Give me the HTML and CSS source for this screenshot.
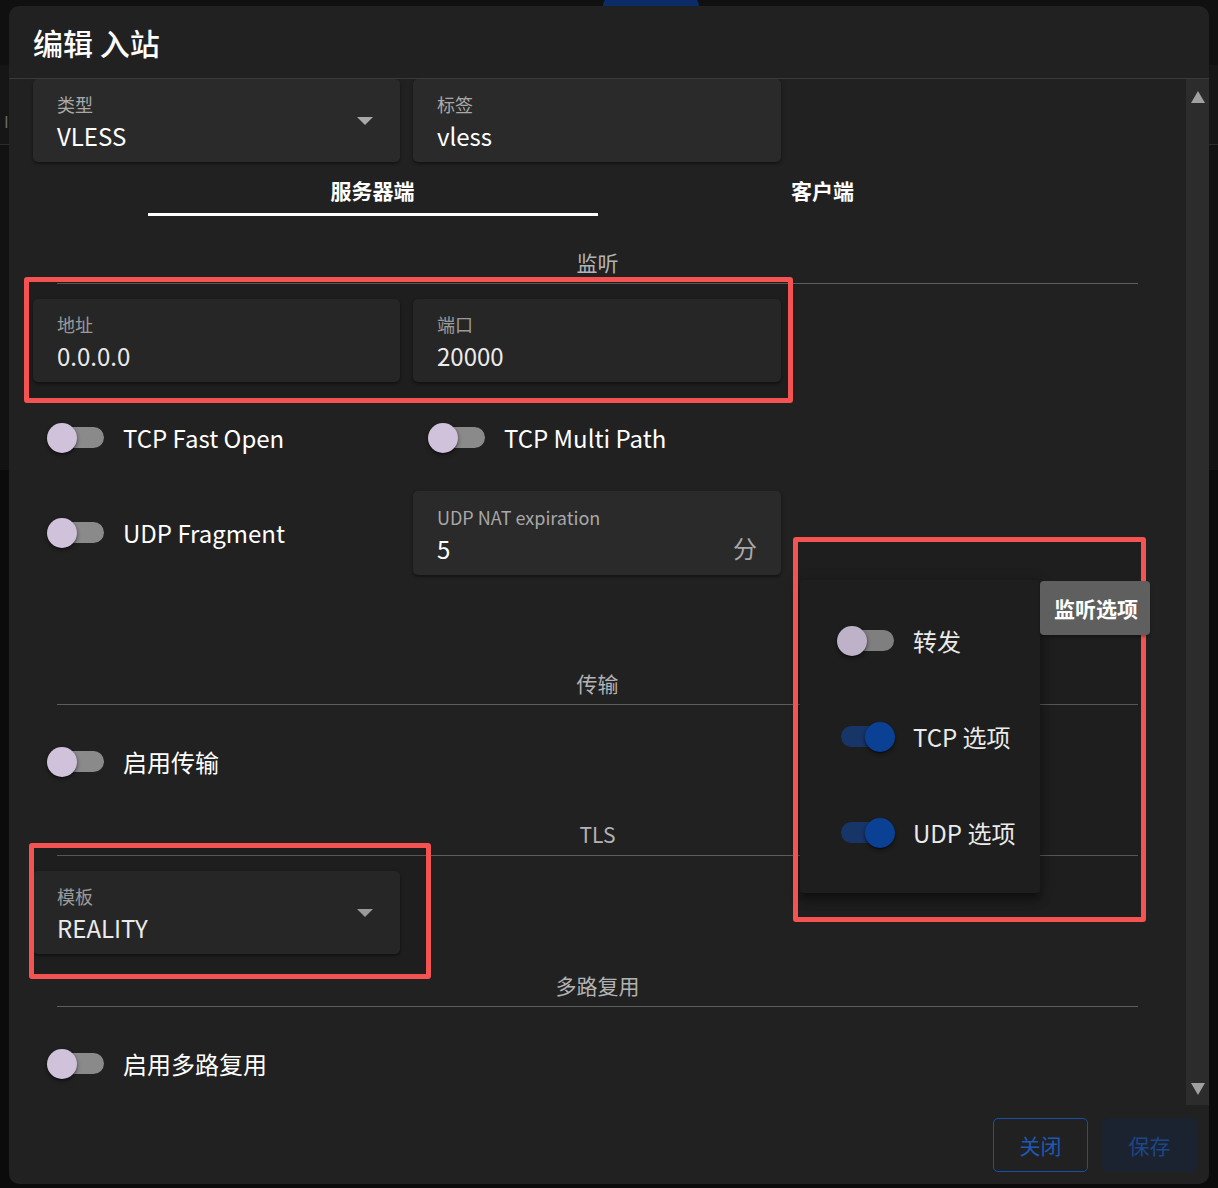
FILE: index.html
```html
<!DOCTYPE html>
<html lang="zh-CN">
<head>
<meta charset="utf-8">
<title>编辑 入站</title>
<link rel="stylesheet" href="styles.css">
</head>
<body>
<div class="page-behind">
  <div class="bg-top"></div>
  <div class="bg-bar"><span class="bg-glyph">I</span></div>
  <div class="bg-mid"></div>
</div>
<div class="behind-pill"></div>

<div class="dialog">
  <div class="dlg-head"><h1>编辑 入站</h1></div>
  <div class="dlg-body">
    <div class="scroll-content">
      <div class="grid2">
        <div class="field">
          <div class="field-text"><div class="field-label">类型</div><div class="field-value">VLESS</div></div>
          <span class="caret"></span>
        </div>
        <div class="field">
          <div class="field-text"><div class="field-label">标签</div><div class="field-value">vless</div></div>
        </div>
      </div>

      <div class="tabs">
        <div class="tab active">服务器端</div>
        <div class="tab">客户端</div>
      </div>

      <div class="section s-listen"><div class="section-title">监听</div><div class="divider"></div></div>

      <div class="grid2 g-addr">
        <div class="field">
          <div class="field-text"><div class="field-label">地址</div><div class="field-value">0.0.0.0</div></div>
        </div>
        <div class="field">
          <div class="field-text"><div class="field-label">端口</div><div class="field-value">20000</div></div>
        </div>
      </div>

      <div class="grid2 g-toggles">
        <div class="switch-row"><span class="switch"><span class="track"></span><span class="thumb"></span></span><span class="switch-label">TCP Fast Open</span></div>
        <div class="switch-row col2"><span class="switch"><span class="track"></span><span class="thumb"></span></span><span class="switch-label">TCP Multi Path</span></div>
      </div>

      <div class="grid2 g-udp">
        <div class="switch-row"><span class="switch"><span class="track"></span><span class="thumb"></span></span><span class="switch-label">UDP Fragment</span></div>
        <div class="field field-tall">
          <div class="field-text"><div class="field-label">UDP NAT expiration</div><div class="field-value">5</div></div>
          <span class="suffix">分</span>
        </div>
      </div>

      <div class="section s-transport"><div class="section-title">传输</div><div class="divider"></div></div>
      <div class="switch-row row-single"><span class="switch"><span class="track"></span><span class="thumb"></span></span><span class="switch-label">启用传输</span></div>

      <div class="section s-tls"><div class="section-title">TLS</div><div class="divider"></div></div>
      <div class="grid2 g-tls">
        <div class="field">
          <div class="field-text"><div class="field-label">模板</div><div class="field-value">REALITY</div></div>
          <span class="caret"></span>
        </div>
      </div>

      <div class="section s-mux"><div class="section-title">多路复用</div><div class="divider"></div></div>
      <div class="switch-row row-single"><span class="switch"><span class="track"></span><span class="thumb"></span></span><span class="switch-label">启用多路复用</span></div>
    </div>
    <div class="scrollbar"><span class="sb-up"></span><span class="sb-down"></span></div>
  </div>
  <div class="dlg-foot">
    <button class="btn btn-outline">关闭</button>
    <button class="btn btn-tonal">保存</button>
  </div>
</div>

<div class="menu">
  <div class="switch-row menu-row"><span class="switch"><span class="track"></span><span class="thumb"></span></span><span class="switch-label">转发</span></div>
  <div class="switch-row menu-row"><span class="switch on"><span class="track"></span><span class="thumb"></span></span><span class="switch-label">TCP 选项</span></div>
  <div class="switch-row menu-row"><span class="switch on"><span class="track"></span><span class="thumb"></span></span><span class="switch-label">UDP 选项</span></div>
</div>

<div class="mark mark-1"></div>
<div class="mark mark-2"></div>
<div class="mark mark-3"></div>
<div class="menu-activator">监听选项</div>
</body>
</html>
```

FILE: styles.css
```css
* { box-sizing: border-box; }
html, body { margin: 0; padding: 0; }
body {
  width: 1218px;
  height: 1188px;
  background: #0b0b0b;
  font-family: "Noto Sans CJK SC", "Noto Sans", sans-serif;
  color: #ffffff;
  position: relative;
  overflow: hidden;
}

/* page under the overlay */
.page-behind { width: 100%; }
.bg-top { height: 65px; background: #101010; }
.bg-bar { height: 80px; background: #161616; border-bottom: 1px solid #2c2c2c; padding: 48px 0 0 4px; }
.bg-glyph { color: #6a6a6a; font-size: 16px; line-height: 16px; display: block; }
.bg-mid { height: 325px; background: #121212; }
.behind-pill {
  position: absolute; left: 603px; top: -4px; width: 96px; height: 24px;
  background: #0c2c68; border-radius: 10px;
}

/* dialog */
.dialog {
  position: absolute;
  left: 9px; top: 6px;
  width: 1200px; height: 1178px;
  background: #212121;
  border-radius: 10px;
  display: flex;
  flex-direction: column;
  overflow: hidden;
}
.dlg-head {
  height: 73px;
  flex: none;
  border-bottom: 1px solid #3a3a3a;
  padding-left: 24px;
  display: flex;
  align-items: center;
}
.dlg-head h1 { margin: 0; font-size: 30px; font-weight: 500; letter-spacing: 0; line-height: 40px; }

.dlg-body { flex: 1; display: flex; min-height: 0; }
.scroll-content { flex: 1; padding: 0 24px; overflow: hidden; }
.scrollbar {
  width: 23px; flex: none;
  background: #2c2c2c;
  display: flex; flex-direction: column; align-items: center; justify-content: space-between;
  padding: 12px 0 10px;
}
.sb-up { width: 0; height: 0; border-left: 7px solid transparent; border-right: 7px solid transparent; border-bottom: 12px solid #a0a0a0; }
.sb-down { width: 0; height: 0; border-left: 7px solid transparent; border-right: 7px solid transparent; border-top: 12px solid #a0a0a0; }

.dlg-foot {
  height: 79px; flex: none;
  display: flex; justify-content: flex-end; align-items: flex-start;
  gap: 14px; padding: 13px 12px 0 0;
}
.btn {
  width: 95px; height: 54px;
  border-radius: 5px;
  font-family: inherit; font-size: 21px;
  display: flex; align-items: center; justify-content: center;
  padding: 0;
}
.btn-outline { background: transparent; border: 1px solid #1a4fa6; color: #1d5ab8; }
.btn-tonal { background: #1b2230; border: none; color: #1b4788; }

/* grid rows */
.grid2 { display: grid; grid-template-columns: 367px 368px; column-gap: 13px; }
.g-addr { margin-top: 15px; }
.g-toggles { margin-top: 24px; height: 64px; }
.g-udp { margin-top: 21px; }
.g-tls { margin-top: 15px; }

/* fields */
.field {
  height: 83px;
  background: #2a2a2a;
  border-radius: 5px;
  box-shadow: 0 2px 2px rgba(0,0,0,0.28), 0 1px 4px rgba(0,0,0,0.18);
  display: flex; align-items: center;
  padding: 4px 27px 0 24px;
}
.field-tall { height: 84px; padding-right: 24px; }
.field-text { flex: 1; }
.field-label { font-size: 18px; line-height: 22px; color: #a8a8a8; }
.field-value { font-size: 24px; line-height: 32px; margin-top: 5px; color: #ffffff; }
.caret {
  width: 0; height: 0; margin-top: -3px;
  border-left: 8px solid transparent; border-right: 8px solid transparent; border-top: 8px solid #a8a8a8;
}
.suffix { font-size: 24px; color: #a8a8a8; margin-top: 24px; }

/* tabs */
.tabs { display: flex; justify-content: center; margin-top: 4px; }
.tab {
  width: 450px; height: 50px;
  display: flex; align-items: center; justify-content: center;
  font-size: 21px; font-weight: 700; color: #ffffff;
  border-bottom: 3px solid transparent;
}
.tab.active { border-bottom-color: #ffffff; }

/* sections */
.section-title { text-align: center; font-size: 21px; line-height: 30px; color: #b3b3b3; }
.divider { margin: 6px 24px 0; border-top: 1px solid #5e5e5e; }
.s-listen { margin-top: 31px; }
.s-transport { margin-top: 93px; }
.s-tls { margin-top: 27px; }
.s-mux { margin-top: 16px; }

/* switches */
.switch-row { display: flex; align-items: center; padding-left: 14px; }
.switch-row.col2 { padding-left: 15px; }
.row-single { height: 60px; margin-top: 27px; }
.switch {
  width: 58px; height: 30px; flex: none;
  display: flex; align-items: center;
  position: relative;
}
.track {
  position: absolute; left: 4px; right: 1px; top: 4px; height: 21px;
  border-radius: 11px; background: #8a8a8a;
}
.thumb {
  position: relative;
  width: 30px; height: 30px; border-radius: 50%;
  background: #cfc2da;
  box-shadow: 0 2px 4px rgba(0,0,0,0.45), 0 1px 1px rgba(0,0,0,0.3);
}
.switch.on { justify-content: flex-end; }
.switch.on .track { background: #1a3a70; }
.switch.on .thumb { background: #0d47a1; }
.switch-label { margin-left: 18px; font-size: 24px; line-height: 32px; color: #ffffff; }

/* overlay menu */
.menu {
  position: absolute; left: 800px; top: 580px;
  width: 240px; height: 313px;
  background: #212121; border-radius: 4px;
  box-shadow: 0 5px 5px -3px rgba(0,0,0,0.3), 0 8px 10px 1px rgba(0,0,0,0.22), 0 3px 14px 2px rgba(0,0,0,0.2);
  padding: 31px 0 0 37px;
  display: flex; flex-direction: column; gap: 36px;
}
.menu-row { height: 60px; padding-left: 0; }
.menu-activator {
  position: absolute; left: 1040px; top: 581px;
  width: 110px; height: 54px;
  background: #5f5f5f; border-radius: 4px;
  box-shadow: 0 2px 3px rgba(0,0,0,0.3);
  font-size: 21px; font-weight: 700; color: #ffffff;
  padding-left: 14px; display: flex; align-items: center;
}

/* annotation boxes */
.mark {
  position: absolute;
  border: 5px solid #f55252;
  border-radius: 3px;
  background: rgba(0,0,0,0.08);
}
.mark-1 { left: 24px; top: 277px; width: 769px; height: 126px; }
.mark-2 { left: 793px; top: 537px; width: 353px; height: 385px; }
.mark-3 { left: 29px; top: 843px; width: 402px; height: 136px; }
```
